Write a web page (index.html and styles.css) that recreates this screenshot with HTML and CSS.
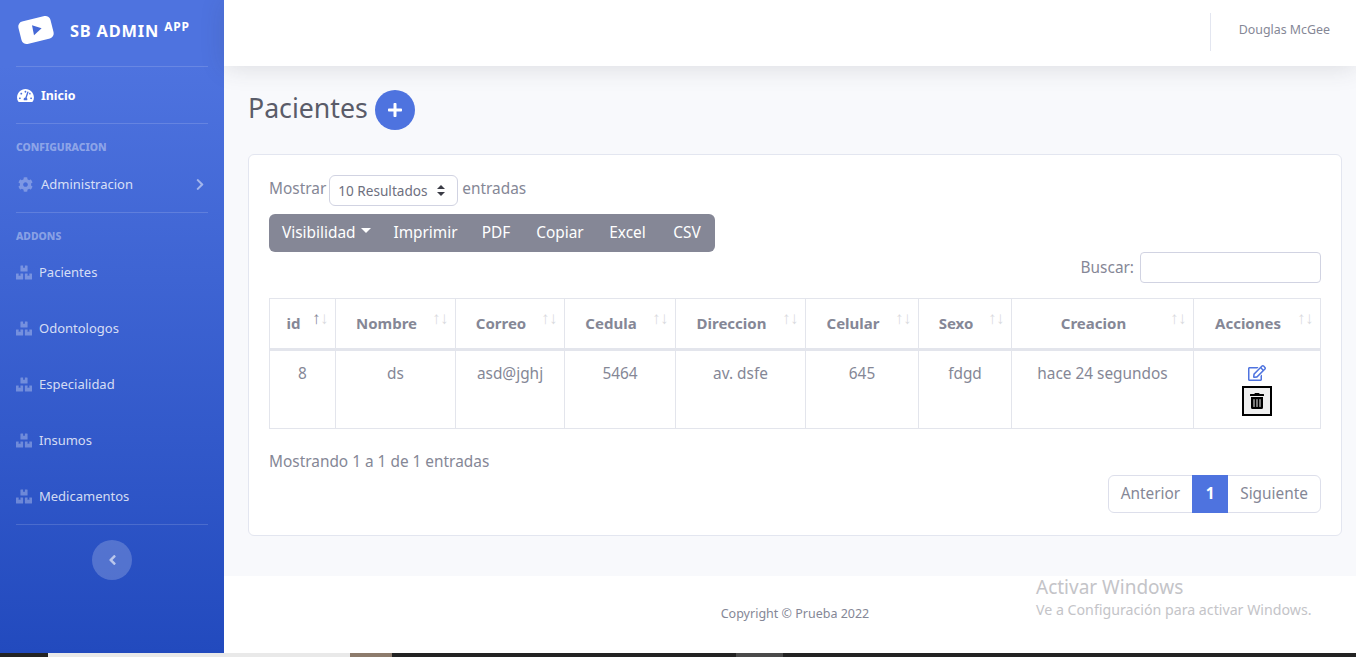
FILE: index.html
```html
<!doctype html>
<html>
  <head>
    <meta charset="utf-8">
    <title>Pacientes</title>
    <link rel="stylesheet" href="styles.css">
  </head>
  <body>
    <svg class="sprites" xmlns="http://www.w3.org/2000/svg">
      <symbol id="i-plus" viewBox="0 0 448 512"><path d="M416 208H272V64c0-17.67-14.33-32-32-32h-32c-17.67 0-32 14.33-32 32v144H32c-17.67 0-32 14.33-32 32v32c0 17.67 14.33 32 32 32h144v144c0 17.67 14.33 32 32 32h32c17.67 0 32-14.33 32-32V304h144c17.67 0 32-14.33 32-32v-32c0-17.67-14.33-32-32-32z"/></symbol>
      <symbol id="i-chevron" viewBox="0 0 320 512"><path d="M285.476 272.971L91.132 467.314c-9.373 9.373-24.569 9.373-33.941 0l-22.667-22.667c-9.357-9.357-9.375-24.522-.04-33.901L188.505 256 34.484 101.255c-9.335-9.379-9.317-24.544.04-33.901l22.667-22.667c9.373-9.373 24.569-9.373 33.941 0L285.475 239.03c9.373 9.372 9.373 24.568.001 33.941z"/></symbol>
      <symbol id="i-angle" viewBox="0 0 256 512"><path d="M31.7 239l136-136c9.4-9.4 24.6-9.4 33.9 0l22.6 22.6c9.4 9.4 9.4 24.6 0 33.9L127.9 256l96.4 96.4c9.4 9.4 9.4 24.6 0 33.9L201.7 409c-9.4 9.4-24.6 9.4-33.9 0l-136-136c-9.5-9.4-9.5-24.6-.1-34z"/></symbol>
      <symbol id="i-trash" viewBox="0 0 448 512"><path d="M32 464a48 48 0 0 0 48 48h288a48 48 0 0 0 48-48V128H32zm272-256a16 16 0 0 1 32 0v224a16 16 0 0 1-32 0zm-96 0a16 16 0 0 1 32 0v224a16 16 0 0 1-32 0zm-96 0a16 16 0 0 1 32 0v224a16 16 0 0 1-32 0zM432 32H312l-9.4-18.7A24 24 0 0 0 281.1 0H166.8a23.72 23.72 0 0 0-21.4 13.3L136 32H16A16 16 0 0 0 0 48v32a16 16 0 0 0 16 16h416a16 16 0 0 0 16-16V48a16 16 0 0 0-16-16z"/></symbol>
      <symbol id="i-edit" viewBox="0 0 576 512"><path d="M402.3 344.9l32-32c5-5 13.7-1.5 13.7 5.7V464c0 26.5-21.5 48-48 48H48c-26.5 0-48-21.5-48-48V112c0-26.5 21.5-48 48-48h273.5c7.1 0 10.7 8.6 5.7 13.7l-32 32c-1.5 1.5-3.5 2.3-5.7 2.3H48v352h352V350.5c0-2.1.8-4.1 2.3-5.6zm156.6-201.8L296.3 405.7l-90.4 10c-26.2 2.9-48.5-19.2-45.6-45.6l10-90.4L432.9 17.1c22.9-22.9 59.9-22.9 82.7 0l43.2 43.2c22.9 22.9 22.9 60 .1 82.8zM460.1 174L402 115.9 216.2 301.8l-7.3 65.3 65.3-7.3L460.1 174zm64.8-79.7l-43.2-43.2c-4.1-4.1-10.8-4.1-14.8 0L436 82l58.1 58.1 30.9-30.9c4-4.2 4-10.8-.1-14.9z"/></symbol>
      <symbol id="i-boxes" viewBox="0 0 576 512"><path d="M560 288h-80v96l-32-21.3-32 21.3v-96h-80c-8.8 0-16 7.2-16 16v192c0 8.8 7.2 16 16 16h224c8.8 0 16-7.2 16-16V304c0-8.8-7.2-16-16-16zm-384-64h224c8.8 0 16-7.2 16-16V16c0-8.8-7.2-16-16-16h-80v96l-32-21.3L256 96V0h-80c-8.8 0-16 7.2-16 16v192c0 8.8 7.2 16 16 16zm64 64h-80v96l-32-21.3L96 384v-96H16c-8.8 0-16 7.2-16 16v192c0 8.8 7.2 16 16 16h224c8.8 0 16-7.2 16-16V304c0-8.8-7.2-16-16-16z"/></symbol>
      <symbol id="i-cog" viewBox="0 0 512 512"><path d="M487.4 315.7l-42.6-24.6c4.3-23.2 4.3-47 0-70.2l42.6-24.6c4.9-2.8 7.1-8.6 5.5-14-11.1-35.6-30-67.8-54.7-94.6-3.8-4.1-10-5.1-14.8-2.3L380.8 110c-17.9-15.4-38.5-27.3-60.8-35.1V25.8c0-5.6-3.9-10.5-9.4-11.7-36.7-8.2-74.3-7.8-109.2 0-5.5 1.2-9.4 6.1-9.4 11.7V75c-22.2 7.9-42.8 19.8-60.8 35.1L88.7 85.5c-4.9-2.8-11-1.9-14.8 2.3-24.7 26.7-43.6 58.9-54.7 94.6-1.7 5.4.6 11.2 5.5 14L67.3 221c-4.3 23.2-4.3 47 0 70.2l-42.6 24.6c-4.9 2.8-7.1 8.6-5.5 14 11.1 35.6 30 67.8 54.7 94.6 3.8 4.1 10 5.1 14.8 2.3l42.6-24.6c17.9 15.4 38.5 27.3 60.8 35.1v49.2c0 5.6 3.9 10.5 9.4 11.7 36.7 8.2 74.3 7.8 109.2 0 5.5-1.2 9.4-6.1 9.4-11.7v-49.2c22.2-7.9 42.8-19.8 60.8-35.1l42.6 24.6c4.9 2.8 11 1.9 14.8-2.3 24.7-26.7 43.6-58.9 54.7-94.6 1.5-5.5-.7-11.3-5.6-14.1zM256 336c-44.1 0-80-35.9-80-80s35.9-80 80-80 80 35.9 80 80-35.9 80-80 80z"/></symbol>
      <symbol id="i-gauge" viewBox="0 0 576 512"><path d="M288 32C128.94 32 0 160.94 0 320c0 52.8 14.25 102.26 39.06 144.8 5.61 9.62 16.3 15.2 27.44 15.2h443c11.14 0 21.83-5.58 27.44-15.2C561.75 422.26 576 372.8 576 320c0-159.06-128.94-288-288-288zm0 64c14.71 0 26.58 10.13 30.32 23.65-1.11 2.26-2.64 4.23-3.45 6.67l-9.22 27.67c-5.13 3.49-10.97 6.01-17.64 6.01-17.67 0-32-14.33-32-32S270.33 96 288 96zM96 384c-17.67 0-32-14.33-32-32s14.33-32 32-32 32 14.33 32 32-14.33 32-32 32zm48-160c-17.67 0-32-14.33-32-32s14.33-32 32-32 32 14.33 32 32-14.33 32-32 32zm246.77-72.41l-61.33 184C343.13 347.33 352 364.54 352 384c0 11.72-3.38 22.55-8.88 32H232.88c-5.5-9.45-8.88-20.28-8.88-32 0-33.94 26.5-61.43 59.9-63.59l61.34-184.01c4.17-12.56 17.73-19.45 30.36-15.17 12.57 4.19 19.35 17.79 15.17 30.36zm14.66 57.2l15.52-46.55c3.47-1.29 7.13-2.23 11.05-2.23 17.67 0 32 14.33 32 32s-14.33 32-32 32c-11.38-.01-20.89-6.28-26.57-15.22zM480 384c-17.67 0-32-14.33-32-32s14.33-32 32-32 32 14.33 32 32-14.33 32-32 32z"/></symbol>
    </svg>

    <div class="wrapper">
      <aside class="sidebar">
        <a class="brand">
          <svg class="brand-logo" viewBox="0 0 38 32">
            <rect x="2.5" y="4.5" width="33" height="23" rx="5" transform="rotate(-14 19 16)" fill="#fff"/>
            <path d="M15 11.2l9.6 3-7.6 7z" fill="#4568d6"/>
          </svg>
          <span class="brand-text">SB ADMIN <sup>APP</sup></span>
        </a>
        <hr class="side-divider">
        <a class="side-link side-link-active">
          <svg class="side-icon-gauge"><use href="#i-gauge"/></svg>
          <span>Inicio</span>
        </a>
        <hr class="side-divider">
        <div class="side-heading">CONFIGURACION</div>
        <a class="side-link side-link-admin">
          <svg class="side-icon-cog"><use href="#i-cog"/></svg>
          <span>Administracion</span>
          <svg class="side-chevron"><use href="#i-chevron"/></svg>
        </a>
        <hr class="side-divider">
        <div class="side-heading">ADDONS</div>
        <a class="side-item"><svg class="side-icon"><use href="#i-boxes"/></svg><span>Pacientes</span></a>
        <a class="side-item"><svg class="side-icon"><use href="#i-boxes"/></svg><span>Odontologos</span></a>
        <a class="side-item"><svg class="side-icon"><use href="#i-boxes"/></svg><span>Especialidad</span></a>
        <a class="side-item"><svg class="side-icon"><use href="#i-boxes"/></svg><span>Insumos</span></a>
        <a class="side-item"><svg class="side-icon"><use href="#i-boxes"/></svg><span>Medicamentos</span></a>
        <hr class="side-divider">
        <button class="side-toggle"><svg><use href="#i-angle"/></svg></button>
      </aside>

      <div class="main">
        <header class="topbar">
          <div class="topbar-sep"></div>
          <span class="topbar-user">Douglas McGee</span>
        </header>

        <section class="content">
          <div class="page-head">
            <h1>Pacientes</h1>
            <a class="add-btn"><svg><use href="#i-plus"/></svg></a>
          </div>

          <div class="card">
            <div class="length-row">
              <span>Mostrar</span>
              <div class="fake-select"><span>10 Resultados</span><span class="select-arrows"></span></div>
              <span>entradas</span>
            </div>

            <div class="btn-group">
              <a class="btn btn-first">Visibilidad<span class="caret"></span></a>
              <a class="btn">Imprimir</a>
              <a class="btn">PDF</a>
              <a class="btn">Copiar</a>
              <a class="btn">Excel</a>
              <a class="btn">CSV</a>
            </div>

            <div class="search-row">
              <span>Buscar:</span>
              <div class="search-input"></div>
            </div>

            <table class="data-table">
              <colgroup>
                <col class="c-id"><col class="c-nombre"><col class="c-correo"><col class="c-cedula"><col class="c-dir">
                <col class="c-cel"><col class="c-sexo"><col class="c-crea"><col class="c-acc">
              </colgroup>
              <thead>
                <tr>
                  <th>id<span class="sort"><b class="on">↑</b><b>↓</b></span></th>
                  <th>Nombre<span class="sort"><b>↑</b><b>↓</b></span></th>
                  <th>Correo<span class="sort"><b>↑</b><b>↓</b></span></th>
                  <th>Cedula<span class="sort"><b>↑</b><b>↓</b></span></th>
                  <th>Direccion<span class="sort"><b>↑</b><b>↓</b></span></th>
                  <th>Celular<span class="sort"><b>↑</b><b>↓</b></span></th>
                  <th>Sexo<span class="sort"><b>↑</b><b>↓</b></span></th>
                  <th>Creacion<span class="sort"><b>↑</b><b>↓</b></span></th>
                  <th>Acciones<span class="sort"><b>↑</b><b>↓</b></span></th>
                </tr>
              </thead>
              <tbody>
                <tr>
                  <td>8</td>
                  <td>ds</td>
                  <td>asd@jghj</td>
                  <td>5464</td>
                  <td>av. dsfe</td>
                  <td>645</td>
                  <td>fdgd</td>
                  <td>hace 24 segundos</td>
                  <td>
                    <div class="actions">
                      <svg class="icon-edit"><use href="#i-edit"/></svg>
                      <a class="trash-btn"><svg><use href="#i-trash"/></svg></a>
                    </div>
                  </td>
                </tr>
              </tbody>
            </table>

            <div class="info">Mostrando 1 a 1 de 1 entradas</div>

            <div class="pager-row">
              <div class="pager">
                <a class="page">Anterior</a>
                <a class="page page-on">1</a>
                <a class="page">Siguiente</a>
              </div>
            </div>
          </div>
        </section>

        <footer class="footer">Copyright © Prueba 2022</footer>
      </div>
    </div>

    <div class="taskbar">
      <i class="tb-dark tb-a"></i>
      <i class="tb-light"></i>
      <i class="tb-photo"></i>
      <i class="tb-dark tb-b"></i>
      <i class="tb-grey"></i>
      <i class="tb-dark tb-c"></i>
    </div>

    <div class="watermark">
      <div class="wm-title">Activar Windows</div>
      <div class="wm-sub">Ve a Configuración para activar Windows.</div>
    </div>
  </body>
</html>
```

FILE: styles.css
```css
* {
  box-sizing: border-box;
}

html, body {
  height: 100%;
}

body {
  margin: 0;
  height: 657px;
  overflow: hidden;
  position: relative;
  display: flex;
  flex-direction: column;
  font-family: "Noto Sans", "Open Sans", sans-serif;
  font-size: 15.4px;
  color: #858796;
  background: #fff;
}

.sprites {
  display: none;
}

.wrapper {
  display: flex;
  height: 653px;
}

/* sidebar */
.sidebar {
  width: 224px;
  flex: none;
  background: linear-gradient(180deg, #4e73df 10%, #224abe 100%);
  padding: 0 16px;
  color: rgba(255, 255, 255, .8);
  font-size: 13px;
}

.brand {
  display: flex;
  align-items: center;
  height: 66px;
  padding-bottom: 6px;
  color: #fff;
}

.brand-logo {
  width: 38px;
  height: 32px;
  margin-left: 1px;
}

.brand-text {
  margin-left: 15px;
  font-size: 16.4px;
  font-weight: 700;
  letter-spacing: .8px;
  white-space: nowrap;
}

.brand-text sup {
  font-size: 12px;
  line-height: 0;
  vertical-align: 6px;
}

.side-divider {
  margin: 0;
  border: 0;
  border-top: 1px solid rgba(255, 255, 255, .15);
}

.side-link {
  display: flex;
  align-items: center;
  height: 56px;
}

.side-link-active {
  color: #fff;
  font-size: 12.4px;
  font-weight: 700;
}

.side-icon-gauge {
  width: 17px;
  height: 15px;
  fill: #fff;
  margin-left: 1px;
  margin-right: 7px;
}

.side-heading {
  font-size: 10.4px;
  font-weight: 800;
  color: rgba(255, 255, 255, .4);
  padding-top: 16px;
  height: 33px;
  line-height: 14px;
}

.side-link-admin {
  height: 55px;
  padding-bottom: 1px;
}

.side-icon-cog {
  width: 15px;
  height: 15px;
  fill: rgba(255, 255, 255, .3);
  margin-left: 2px;
  margin-right: 8px;
}

.side-chevron {
  width: 10px;
  height: 13px;
  margin-left: auto;
  margin-right: 3px;
  fill: rgba(255, 255, 255, .5);
}

.side-item {
  display: flex;
  align-items: center;
  height: 56px;
}

.side-heading + .side-item {
  margin-top: -2px;
}

.side-icon {
  width: 16px;
  height: 15px;
  fill: rgba(255, 255, 255, .3);
  margin-right: 7px;
}

.side-toggle {
  display: flex;
  align-items: center;
  justify-content: center;
  width: 40px;
  height: 40px;
  margin: 15px auto 0;
  padding: 0;
  border: 0;
  border-radius: 50%;
  background: rgba(255, 255, 255, .2);
}

.side-toggle svg {
  width: 9px;
  height: 16px;
  fill: rgba(255, 255, 255, .6);
}

/* main */
.main {
  flex: 1;
  min-width: 0;
  display: flex;
  flex-direction: column;
}

.topbar {
  display: flex;
  align-items: center;
  justify-content: flex-end;
  height: 66px;
  flex: none;
  padding: 0 26px 7px 0;
  background: #fff;
  box-shadow: 0 2px 24px rgba(58, 59, 69, .15);
  position: relative;
}

.topbar-sep {
  width: 1px;
  height: 38px;
  margin: 4px 28px 0 0;
  background: #e3e6f0;
}

.topbar-user {
  font-size: 12.4px;
}

.content {
  flex: 1;
  padding: 0 14px 0 24px;
  background: #f8f9fc;
}

.page-head {
  display: flex;
  align-items: center;
  height: 88px;
  gap: 7px;
}

.page-head h1 {
  margin: 0 0 5px;
  font-size: 26.7px;
  font-weight: 400;
  color: #5a5c69;
}

.add-btn {
  display: flex;
  align-items: center;
  justify-content: center;
  width: 40px;
  height: 40px;
  border-radius: 50%;
  background: #4e73df;
}

.add-btn svg {
  width: 14px;
  height: 16px;
  fill: #fff;
}

.card {
  height: 382px;
  padding: 20px;
  background: #fff;
  border: 1px solid #e3e6f0;
  border-radius: 6px;
}

.length-row {
  display: flex;
  align-items: flex-start;
  gap: 3px;
  height: 31px;
  line-height: 27px;
}

.fake-select {
  display: flex;
  align-items: center;
  justify-content: space-between;
  width: 129px;
  height: 31px;
  margin-right: 1px;
  padding: 0 12px 1px 8px;
  border: 1px solid #d1d3e2;
  border-radius: 6px;
  font-size: 13.6px;
  color: #6e707e;
}

.select-arrows {
  position: relative;
  width: 8px;
  height: 11px;
  margin-top: 1px;
}

.select-arrows::before,
.select-arrows::after {
  content: "";
  position: absolute;
  left: 0;
  border-left: 4px solid transparent;
  border-right: 4px solid transparent;
}

.select-arrows::before {
  top: 0;
  border-bottom: 4.5px solid #3b3c46;
}

.select-arrows::after {
  bottom: 0;
  border-top: 4.5px solid #3b3c46;
}

.btn-group {
  display: grid;
  grid-template-columns: 114px 85px 56px 72px 63px 56px;
  width: 446px;
  margin-top: 8px;
  height: 38px;
  background: #858796;
  border-radius: 6px;
  color: #fff;
}

.btn {
  display: flex;
  align-items: center;
  justify-content: center;
  padding-bottom: 2px;
}

.btn-first {
  justify-content: flex-start;
  padding-left: 13px;
  white-space: nowrap;
}

.caret {
  display: inline-block;
  margin-left: 5px;
  margin-bottom: 3px;
  border-top: 5px solid #fff;
  border-left: 5px solid transparent;
  border-right: 5px solid transparent;
}

.search-row {
  display: flex;
  align-items: center;
  justify-content: flex-end;
  gap: 6px;
  height: 31px;
}

.search-input {
  width: 181px;
  height: 31px;
  border: 1px solid #d1d3e2;
  border-radius: 4px;
}

.data-table {
  width: 1051px;
  margin-top: 15px;
  border-collapse: collapse;
  table-layout: fixed;
}

.c-id { width: 66px; }
.c-nombre { width: 120px; }
.c-correo { width: 109px; }
.c-cedula { width: 111px; }
.c-dir { width: 130px; }
.c-cel { width: 113px; }
.c-sexo { width: 93px; }
.c-crea { width: 182px; }
.c-acc { width: 127px; }

.data-table th,
.data-table td {
  border: 1px solid #e3e5ec;
  text-align: center;
  vertical-align: top;
}

.data-table th {
  position: relative;
  height: 51px;
  padding: 14px 18px 0 0;
  border-bottom-width: 3px;
  font-size: 15px;
  font-weight: 700;
  line-height: 20px;
}

.data-table td {
  height: 79px;
  padding: 13px 0 0;
  line-height: 20px;
}

.sort {
  position: absolute;
  top: 9px;
  right: 7px;
  display: flex;
  font-size: 17px;
  line-height: 20px;
}

.sort b {
  font-weight: 400;
  opacity: .3;
  width: 8px;
  display: block;
  text-align: center;
}

.sort b.on {
  opacity: 1;
}

.actions {
  display: flex;
  flex-direction: column;
  align-items: center;
}

.icon-edit {
  width: 18px;
  height: 16px;
  fill: #4e73df;
  margin-top: 1px;
}

.trash-btn {
  display: flex;
  align-items: center;
  justify-content: center;
  width: 30px;
  height: 30px;
  margin-top: 5px;
  border: 2px solid #000;
  background: #efefef;
}

.trash-btn svg {
  width: 14px;
  height: 16px;
  fill: #000;
}

.info {
  margin-top: 22px;
  line-height: 22px;
}

.pager-row {
  display: flex;
  justify-content: flex-end;
  margin-top: 2px;
}

.pager {
  display: flex;
  height: 38px;
  border: 1px solid #dddfeb;
  border-radius: 6px;
}

.page {
  display: flex;
  align-items: center;
  padding: 0 12px 2px;
}

.page-on {
  justify-content: center;
  width: 36px;
  padding: 0 0 2px;
  margin: -1px 0;
  background: #4e73df;
  color: #fff;
  font-weight: 700;
}

.footer {
  height: 77px;
  flex: none;
  padding: 29px 0 0 10px;
  background: #fff;
  text-align: center;
  font-size: 12.5px;
  color: #858796;
}

/* bottom strip of the photographed desktop */
.taskbar {
  display: flex;
  height: 4px;
  flex: none;
}

.tb-dark { background: #232323; }
.tb-a { width: 48px; }
.tb-light { width: 302px; background: #e9e9e9; }
.tb-photo { width: 42px; background: #8d7b6c; }
.tb-b { width: 344px; }
.tb-grey { width: 47px; background: #4a4a4a; }
.tb-c { flex: 1; }

.watermark {
  position: absolute;
  left: 1036px;
  top: 575px;
  color: #c4c4c8;
  white-space: nowrap;
}

.wm-title {
  font-size: 19px;
  line-height: 25px;
}

.wm-sub {
  font-size: 14.2px;
  line-height: 19px;
}
```
